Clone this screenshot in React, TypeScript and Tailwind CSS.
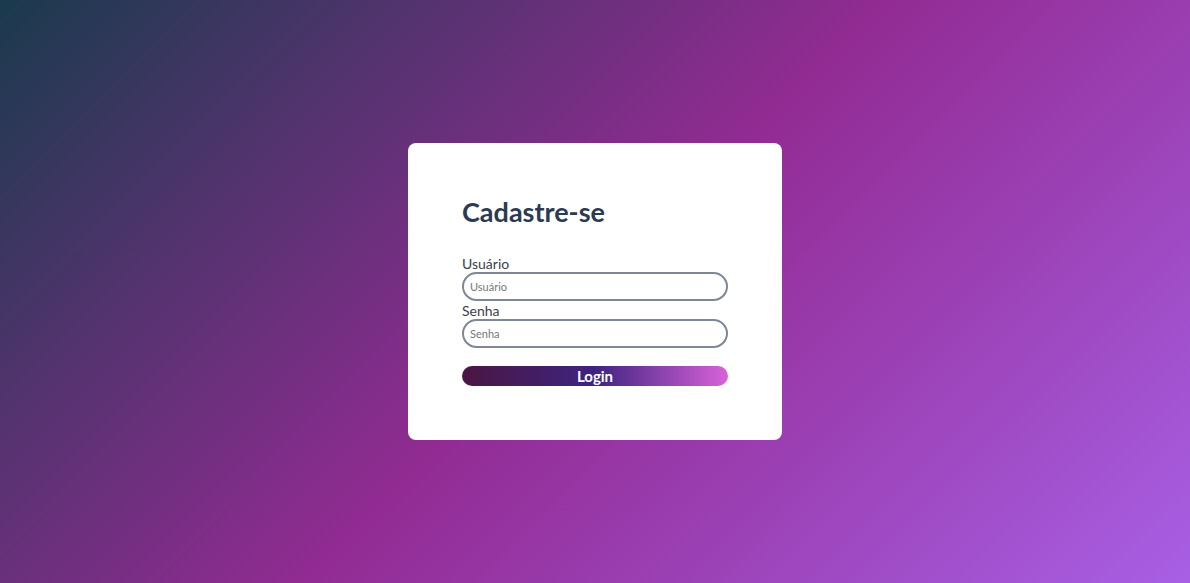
export default function App() {
  return (
    <div className="min-h-screen w-full flex items-center justify-center bg-[linear-gradient(135deg,#1a3a4d_0%,#922b93_50%,#a85fe4_100%)] font-['Lato','Open_Sans',sans-serif]">
      <div className="w-[374px] h-[297px] bg-white rounded-lg px-[54px] pt-[53px]">
        <h1 className="text-[27px] leading-[32px] font-bold text-[#2c3a52]">Cadastre-se</h1>
        <form className="mt-[27px] flex flex-col" onSubmit={(e) => e.preventDefault()}>
          <label className="text-[14px] leading-[17px] text-[#3a3f4b]">Usuário</label>
          <input
            type="text"
            placeholder="Usuário"
            className="h-[29px] w-full rounded-full border-2 border-[#7d8797] px-[6px] text-[11px] text-[#333] placeholder:text-[#777] outline-none"
          />
          <label className="mt-[1px] text-[14px] leading-[17px] text-[#3a3f4b]">Senha</label>
          <input
            type="password"
            placeholder="Senha"
            className="h-[29px] w-full rounded-full border-2 border-[#7d8797] px-[6px] text-[11px] text-[#333] placeholder:text-[#777] outline-none"
          />
          <button
            type="submit"
            className="mt-[18px] h-[20px] w-full rounded-full bg-[linear-gradient(90deg,#4a1642_0%,#3e2480_50%,#d862da_100%)] text-white text-[15px] leading-[20px] font-bold"
          >
            Login
          </button>
        </form>
      </div>
    </div>
  );
}
